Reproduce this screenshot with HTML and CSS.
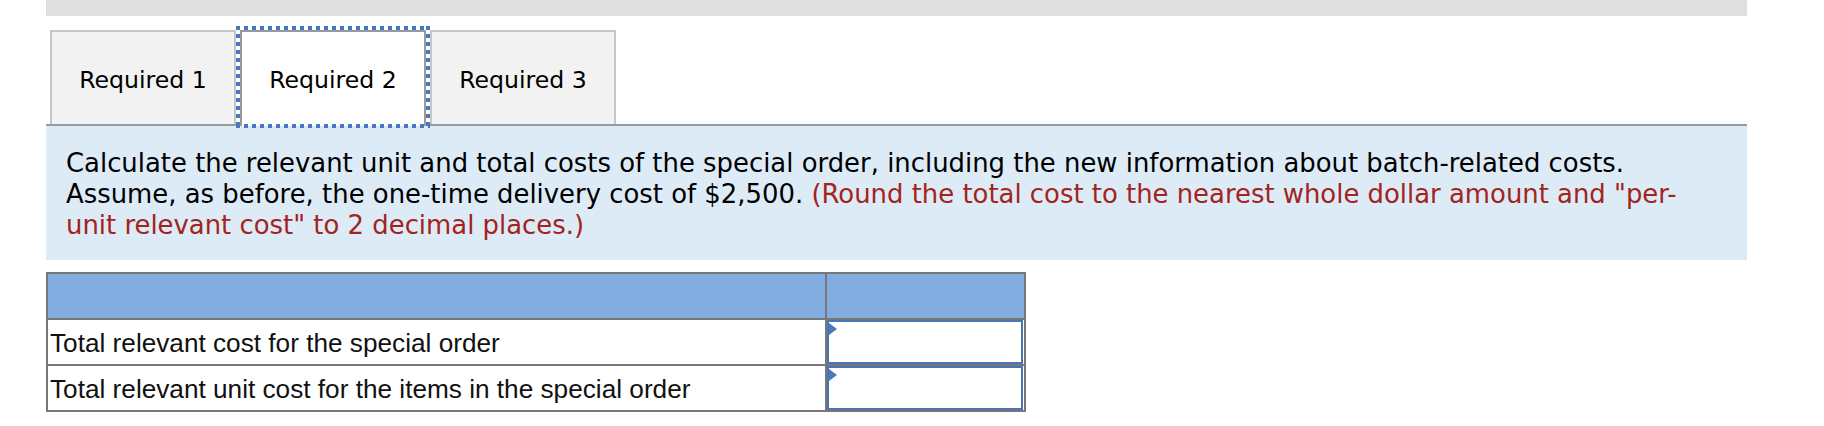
FILE: index.html
```html
<!DOCTYPE html>
<html lang="en">
<head>
<meta charset="utf-8">
<title>Required 2</title>
<link rel="stylesheet" href="styles.css">
</head>
<body>
<div class="page">
  <div class="topbar"></div>
  <div class="tabs">
    <div class="tab">Required 1</div>
    <div class="tab tab-active">Required 2</div>
    <div class="tab">Required 3</div>
  </div>
  <div class="panel">
    <p class="question">Calculate the relevant unit and total costs of the special order, including the new information about batch-related costs. Assume, as before, the one-time delivery cost of $2,500. <span class="note">(Round the total cost to the nearest whole dollar amount and "per-unit relevant cost" to 2 decimal places.)</span></p>
  </div>
  <table class="grid">
    <tr class="head"><td class="label"></td><td class="value"></td></tr>
    <tr><td class="label">Total relevant cost for the special order</td><td class="value"><div class="input"></div></td></tr>
    <tr><td class="label">Total relevant unit cost for the items in the special order</td><td class="value"><div class="input"></div></td></tr>
  </table>
</div>
</body>
</html>
```

FILE: styles.css
```css
html, body {
  margin: 0;
  padding: 0;
  background: #ffffff;
}

.page {
  margin-left: 46px;
  width: 1701px;
}

.topbar {
  height: 16px;
  background: #dfdfdf;
}

.tabs {
  display: flex;
  gap: 4px;
  padding-left: 4px;
  margin-top: 14px;
  border-bottom: 2px solid #999999;
}

.tab {
  box-sizing: border-box;
  width: 186px;
  height: 94px;
  display: flex;
  align-items: center;
  justify-content: center;
  background: #f2f2f2;
  border: 2px solid #c6c6c6;
  border-bottom: none;
  font-family: "DejaVu Sans", Verdana, sans-serif;
  font-size: 23.6px;
  color: #000000;
  padding-top: 3px;
}

.tab-active {
  position: relative;
  background: #ffffff;
  border-color: #9a9a9a;
  height: 96px;
  margin-bottom: -2px;
  padding-top: 1px;
}

.tab-active::after {
  content: "";
  position: absolute;
  top: -6px;
  left: -6px;
  right: -6px;
  bottom: -2px;
  background:
    repeating-linear-gradient(to right, #4a78c0 0 4px, transparent 4px 8px) top left / 100% 4px no-repeat,
    repeating-linear-gradient(to right, #4a78c0 0 4px, transparent 4px 8px) bottom left / 100% 4px no-repeat,
    repeating-linear-gradient(to bottom, #4a78c0 0 4px, transparent 4px 8px) top left / 4px 100% no-repeat,
    repeating-linear-gradient(to bottom, #4a78c0 0 4px, transparent 4px 8px) top right / 4px 100% no-repeat;
  pointer-events: none;
}

.panel {
  background: #ddebf7;
  padding: 22px 34px 19px 20px;
}

.question {
  margin: 0;
  font-family: "DejaVu Sans", Verdana, sans-serif;
  font-size: 25.9px;
  line-height: 31px;
  color: #000000;
}

.note {
  color: #a3231d;
}

.grid {
  margin-top: 12px;
  border-collapse: collapse;
  width: 980px;
  border: 2px solid #777777;
  font-family: "Liberation Sans", Arial, sans-serif;
  font-size: 26.2px;
  color: #111111;
}

.grid td {
  border: 2px solid #777777;
  height: 44px;
  padding: 0;
}

.grid .label {
  width: 777px;
  height: 42px;
  padding-left: 2px;
  padding-top: 2px;
}

.grid .head td {
  background: #82abdf;
}

.grid .value {
  width: 198px;
}

.input {
  position: relative;
  box-sizing: border-box;
  height: 44px;
  margin-right: 1px;
  border: 2px solid #4a74b4;
  background: #ffffff;
}

.input::before {
  content: "";
  position: absolute;
  top: 1px;
  left: 0;
  border-left: 8px solid #4a78c0;
  border-top: 6px solid transparent;
  border-bottom: 6px solid transparent;
}
```
